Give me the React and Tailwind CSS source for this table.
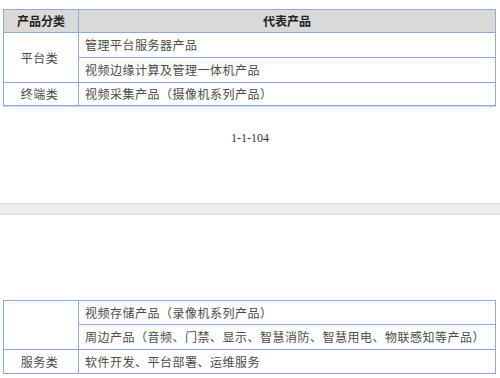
export default function App() {
  const cjk = "font-['Noto_Sans_CJK_SC',sans-serif]";
  const cell = "border-r border-b border-[#8eaadb] flex items-center";
  const body = `${cjk} text-[12px] tracking-[0.5px] text-[#4a4a4a] leading-none`;

  return (
    <div className="w-[500px] h-[378px] bg-white overflow-hidden flex flex-col">
      {/* product category table, first page */}
      <div className="mt-[9px] ml-[3px] w-[493px] grid grid-cols-[75px_417px] grid-rows-[23px_25px_25px_23px] border-l border-t border-[#8eaadb] shadow-[0_1px_0_#c8d6ee]">
        <div className={`${cell} justify-center bg-[#d9d9d9]`}>
          <span className={`${cjk} text-[12px] font-bold text-[#222] leading-none`}>产品分类</span>
        </div>
        <div className={`${cell} justify-center bg-[#d9d9d9]`}>
          <span className={`${cjk} text-[12px] font-bold text-[#222] leading-none`}>代表产品</span>
        </div>
        <div className={`${cell} justify-center row-span-2 pr-[3px]`}>
          <span className={body}>平台类</span>
        </div>
        <div className={`${cell} pl-[6px]`}>
          <span className={body}>管理平台服务器产品</span>
        </div>
        <div className={`${cell} pl-[6px]`}>
          <span className={body}>视频边缘计算及管理一体机产品</span>
        </div>
        <div className={`${cell} justify-center pr-[3px]`}>
          <span className={body}>终端类</span>
        </div>
        <div className={`${cell} pl-[6px]`}>
          <span className={body}>视频采集产品（摄像机系列产品）</span>
        </div>
      </div>

      {/* page footer */}
      <div className="mt-[24px] h-[16px] flex items-center justify-center">
        <span className="font-['Liberation_Serif',serif] text-[12px] leading-[16px] text-[#333]">1-1-104</span>
      </div>

      {/* page break band */}
      <div className="mt-[57px] h-[12px] bg-[#ececec] border-t border-b border-[#dcdcdc]" />

      {/* product category table, continued */}
      <div className="mt-[85px] ml-[3px] w-[493px] grid grid-cols-[75px_417px] grid-rows-[24px_25px_24px] border-l border-t border-[#8eaadb]">
        <div className={`${cell} row-span-2`} />
        <div className={`${cell} pl-[6px]`}>
          <span className={body}>视频存储产品（录像机系列产品）</span>
        </div>
        <div className={`${cell} pl-[6px]`}>
          <span className={body}>周边产品（音频、门禁、显示、智慧消防、智慧用电、物联感知等产品）</span>
        </div>
        <div className={`${cell} justify-center pr-[3px]`}>
          <span className={body}>服务类</span>
        </div>
        <div className={`${cell} pl-[6px]`}>
          <span className={body}>软件开发、平台部署、运维服务</span>
        </div>
      </div>
    </div>
  );
}
